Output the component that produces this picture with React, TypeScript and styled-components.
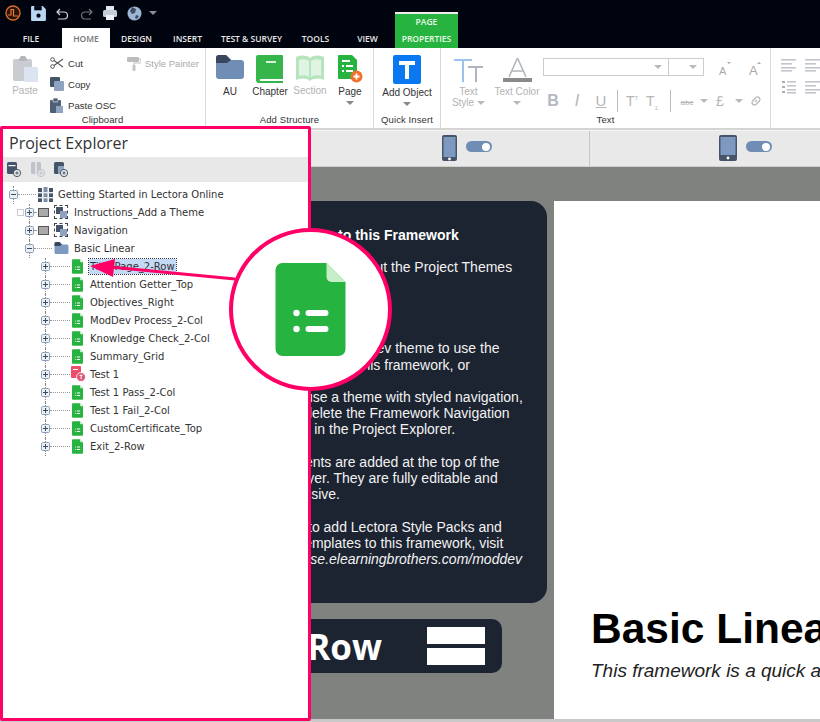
import { createGlobalStyle, styled } from 'styled-components';

const GlobalStyle = createGlobalStyle`
  html, body {
    margin: 0;
    padding: 0;
    height: 722px;
    overflow: hidden;
    background: #c8c8c8;
    font-family: "Liberation Sans", Arial, sans-serif;
  }
`;

const PINK = '#ff0066';
const GREEN = '#27b33f';
const SLATE = '#6f8db5';
const DARK_SLATE = '#46546a';

const Page = styled.div`
  position: relative;
  width: 820px;
  height: 722px;
  overflow: hidden;
  display: flex;
  flex-direction: column;
`;

/* ---------- title bar + tabs ---------- */
const TopBar = styled.div`
  height: 48px;
  background: #00040f;
  flex: none;
  display: flex;
  flex-direction: column;
`;
const QuickBar = styled.div`
  height: 28px;
  display: flex;
  align-items: center;
  padding: 0 0 2px 5px;
  gap: 8.5px;
  box-sizing: border-box;
`;
const TabRow = styled.div`
  display: flex;
  height: 20px;
  align-items: stretch;
`;
const Tab = styled.div<{ $w: number; $active?: boolean }>`
  width: ${(p) => p.$w}px;
  display: flex;
  align-items: center;
  justify-content: center;
  font-family: "Open Sans", sans-serif;
  font-size: 8.5px;
  font-weight: 600;
  color: ${(p) => (p.$active ? '#777' : '#e8e8e8')};
  background: ${(p) => (p.$active ? '#fff' : 'transparent')};
  white-space: nowrap;
`;
const ContextTab = styled.div`
  width: 63px;
  height: 36px;
  margin-top: -16px;
  box-sizing: border-box;
  border-top: 2px solid #eee;
  background: ${GREEN};
  color: #eafbe9;
  font-family: "Open Sans", sans-serif;
  font-size: 8.5px;
  font-weight: 600;
  text-align: center;
  display: flex;
  flex-direction: column;
  justify-content: space-between;
  padding: 2px 0 3px;
  line-height: 12px;
`;

/* ---------- ribbon ---------- */
const Ribbon = styled.div`
  height: 80px;
  flex: none;
  background: #fff;
  display: flex;
  border-bottom: 2px solid #d4d4d4;
`;
const Group = styled.div<{ $w: number }>`
  width: ${(p) => p.$w}px;
  flex: none;
  box-sizing: border-box;
  border-right: 1px solid #d8d8d8;
  display: flex;
  flex-direction: column;
`;
const GroupBody = styled.div<{ $pad?: number }>`
  flex: 1;
  display: flex;
  padding-left: ${(p) => p.$pad ?? 0}px;
  min-height: 0;
`;
const GroupLabel = styled.div`
  height: 15px;
  line-height: 13px;
  text-align: center;
  font-size: 9.5px;
  color: #333;
  flex: none;
  letter-spacing: 0.1px;
`;
const BigButton = styled.div<{ $w: number; $muted?: boolean }>`
  width: ${(p) => p.$w}px;
  flex: none;
  display: flex;
  flex-direction: column;
  align-items: center;
  padding-top: 7px;
  box-sizing: border-box;
  font-size: 10px;
  line-height: 11px;
  color: ${(p) => (p.$muted ? '#b2b2b2' : '#333')};
  text-align: center;
  svg { flex: none; }
`;
const TextStyleButton = styled(BigButton)`
  padding: 10px 4px 0 0;
`;
const TextColorButton = styled(BigButton)`
  padding-top: 9px;
  margin-left: -4px;
`;
const BigLabel = styled.span<{ $mt?: number }>`
  margin-top: ${(p) => p.$mt ?? 3}px;
  white-space: nowrap;
`;
const Caret = styled.span<{ $inline?: boolean; $light?: boolean }>`
  display: ${(p) => (p.$inline ? 'inline-block' : 'block')};
  width: 0;
  height: 0;
  flex: none;
  border-left: 4px solid transparent;
  border-right: 4px solid transparent;
  border-top: 4px solid ${(p) => (p.$light ? '#b9b9b9' : '#888')};
  margin: ${(p) => (p.$inline ? '0 0 1px 3px' : '4px auto 0')};
  vertical-align: middle;
`;
const QuickCaret = styled(Caret)`
  margin: 0 0 0 -1px;
  border-top-color: #8a8f96;
`;
const SmallCol = styled.div<{ $ml?: number }>`
  display: flex;
  flex-direction: column;
  gap: 6.5px;
  padding-top: 8px;
  margin-left: ${(p) => p.$ml ?? 0}px;
`;
const SmallItem = styled.div<{ $muted?: boolean }>`
  display: flex;
  align-items: center;
  gap: 4px;
  height: 15px;
  font-size: ${(p) => (p.$muted ? 9.5 : 9.6)}px;
  color: ${(p) => (p.$muted ? '#aaa' : '#333')};
  white-space: nowrap;
`;
const TextTools = styled.div`
  display: flex;
  flex-direction: column;
  padding-left: 5px;
`;
const SelectRow = styled.div`
  display: flex;
  align-items: center;
  height: 18px;
  margin-top: 10px;
`;
const FakeSelect = styled.div<{ $w: number }>`
  width: ${(p) => p.$w}px;
  height: 18px;
  box-sizing: border-box;
  border: 1px solid #ccc;
  margin-right: -1px;
  display: flex;
  align-items: center;
  justify-content: flex-end;
  padding-right: 6px;
`;
const SizeGlyph = styled.span<{ $ml: number; $big?: boolean }>`
  margin: 7px 0 0 ${(p) => p.$ml}px;
  font-size: ${(p) => (p.$big ? 13 : 11)}px;
  line-height: 12px;
  color: #a8a8a8;
  width: 12px;
  position: relative;
  &::after {
    content: '';
    position: absolute;
    right: 0;
    top: -3px;
    border-left: 2px solid transparent;
    border-right: 2px solid transparent;
    ${(p) => (p.$big ? 'border-bottom: 2px solid #a8a8a8;' : 'border-top: 2px solid #a8a8a8;')}
  }
`;
const FormatRow = styled.div`
  display: flex;
  align-items: center;
  height: 22px;
  margin-top: 14px;
  color: #b5b5b5;
`;
const FormatGlyph = styled.span<{ $w: number; $b?: boolean; $i?: boolean; $u?: boolean; $size?: number }>`
  width: ${(p) => p.$w}px;
  text-align: center;
  flex: none;
  font-size: ${(p) => p.$size ?? 14}px;
  line-height: 22px;
  font-weight: ${(p) => (p.$b ? 700 : 400)};
  font-style: ${(p) => (p.$i ? 'italic' : 'normal')};
  text-decoration: ${(p) => (p.$u ? 'underline' : 'none')};
  color: ${(p) => (p.$b ? '#b4b9c4' : '#b5b5b5')};
  sup, sub { font-size: 6px; line-height: 0; }
  s { font-size: 8px; }
`;
const FormatSep = styled.span`
  width: 1px;
  height: 22px;
  background: #bbb;
  flex: none;
  margin: 0 6px;
`;
const LinkSlot = styled.span`
  margin-left: 6px;
  display: flex;
`;
const AlignGrid = styled.div`
  display: grid;
  grid-template-columns: 15px 15px;
  grid-auto-rows: 14px;
  gap: 8px 9px;
  padding: 10px 0 0 10px;
`;

/* ---------- device bar ---------- */
const DeviceBar = styled.div`
  height: 37px;
  flex: none;
  display: flex;
  background: #e9e9e9;
  border-bottom: 1px solid #d0d0d0;
  border-top: 1px solid #f4f4f4;
  box-sizing: border-box;
`;
const DeviceCell = styled.div<{ $w?: number; $pad: number }>`
  width: ${(p) => (p.$w ? `${p.$w}px` : 'auto')};
  flex: ${(p) => (p.$w ? 'none' : '1')};
  box-sizing: border-box;
  display: flex;
  align-items: center;
  gap: 9px;
  padding-left: ${(p) => p.$pad}px;
  border-right: ${(p) => (p.$w ? '1px solid #c6c6c6' : 'none')};
`;
const Toggle = styled.span`
  width: 26px;
  height: 11px;
  border-radius: 6px;
  background: ${SLATE};
  position: relative;
  margin-top: -4px;
  &::after {
    content: '';
    position: absolute;
    right: 2px;
    top: 1.5px;
    width: 8px;
    height: 8px;
    border-radius: 50%;
    background: #fff;
  }
`;

/* ---------- canvas ---------- */
const Canvas = styled.div`
  flex: none;
  height: 552px;
  background: #808280;
  display: flex;
  padding-top: 34px;
  box-sizing: border-box;
  gap: 7px;
`;
const LeftCol = styled.div`
  width: 547px;
  flex: none;
  display: flex;
  flex-direction: column;
  gap: 16px;
`;
const InfoCard = styled.div`
  height: 402px;
  flex: none;
  box-sizing: border-box;
  background: #1c2331;
  border-radius: 0 16px 16px 0;
  padding: 26px 0 0 273px;
  color: #f2f2f2;
  font-size: 14px;
  line-height: 16.2px;
`;
const InfoHead = styled.div`
  font-weight: 700;
  color: #fff;
  white-space: nowrap;
  margin-bottom: 16.2px;
`;
const InfoPara = styled.p`
  margin: 0 0 16.2px;
  white-space: nowrap;
  em { font-style: italic; }
`;
const RowCard = styled.div`
  height: 54px;
  margin-right: 45px;
  background: #1c2331;
  border-radius: 0 10px 10px 0;
  display: flex;
  align-items: center;
  justify-content: flex-end;
  gap: 45px;
  padding-right: 17px;
`;
const RowTitle = styled.span`
  font-family: "Open Sans", sans-serif;
  font-size: 35px;
  font-weight: 700;
  color: #fff;
  white-space: nowrap;
`;
const RowGlyph = styled.div`
  width: 58px;
  display: flex;
  flex-direction: column;
  gap: 4px;
  i { display: block; height: 17px; background: #fff; }
`;
const WhitePage = styled.div`
  flex: 1;
  background: #fff;
  display: flex;
  flex-direction: column;
  justify-content: flex-end;
  padding: 0 0 37px 37px;
  min-width: 0;
  white-space: nowrap;
`;
const BigTitle = styled.h1`
  margin: 0;
  font-size: 42.5px;
  line-height: 50px;
  font-weight: 700;
  color: #000;
`;
const Subtitle = styled.div`
  margin-top: 6px;
  font-size: 19px;
  line-height: 22px;
  font-style: italic;
  color: #222;
`;

/* ---------- project explorer (highlighted overlay) ---------- */
const Explorer = styled.aside`
  position: absolute;
  left: 0;
  top: 126px;
  width: 311px;
  height: 595px;
  box-sizing: border-box;
  border: 3px solid ${PINK};
  border-radius: 2px;
  background: #fff;
  display: flex;
  flex-direction: column;
`;
const ExplorerTitle = styled.div`
  height: 28px;
  flex: none;
  padding-left: 6px;
  font-family: "Open Sans", sans-serif;
  font-size: 16px;
  line-height: 28px;
  color: #333;
`;
const ExplorerTools = styled.div`
  height: 25px;
  flex: none;
  background: #e8e8e8;
  display: flex;
  align-items: center;
  gap: 9.5px;
  padding-left: 4px;
`;
const Tree = styled.div`
  padding-top: 3px;
`;
const TreeRow = styled.div<{ $level: number }>`
  height: 18px;
  display: flex;
  align-items: center;
  padding-left: ${(p) => 6 + p.$level * 16}px;
  font-family: "DejaVu Sans", sans-serif;
  font-size: 10px;
  color: #333;
  white-space: nowrap;
`;
const Expander = styled.span<{ $minus?: boolean }>`
  width: 9px;
  height: 9px;
  box-sizing: border-box;
  flex: none;
  border: 1px solid #8ea0b8;
  border-radius: 2px;
  background: #eaeff6;
  position: relative;
  &::before {
    content: '';
    position: absolute;
    left: 3px;
    top: -5px;
    height: 18px;
    border-left: 1px dotted #8a8a8a;
  }
  &::after {
    content: '';
    position: absolute;
    inset: 0;
    background:
      linear-gradient(#3c4a60, #3c4a60) center / 5px 1px no-repeat,
      linear-gradient(#3c4a60, #3c4a60) center / ${(p) => (p.$minus ? '0 0' : '1px 5px')} no-repeat,
      #eaeff6;
  }
`;
const Faint = styled.span`
  width: 7px;
  height: 7px;
  border: 1px solid #ccc;
  flex: none;
  margin: 0 1px 0 -8px;
  box-sizing: border-box;
`;
const Dots = styled.span<{ $w: number }>`
  width: ${(p) => p.$w}px;
  flex: none;
  border-top: 1px dotted #999;
  margin-right: 2px;
`;
const Label = styled.span<{ $ml: number; $selected?: boolean }>`
  margin-left: ${(p) => p.$ml}px;
  padding: 1px 1px;
  line-height: 13px;
  outline: ${(p) => (p.$selected ? '1px dotted #334' : 'none')};
  background: ${(p) => (p.$selected ? '#c3d9f5' : 'transparent')};
`;
const StateBox = styled.span`
  width: 11px;
  height: 9px;
  box-sizing: border-box;
  border: 1px solid #555;
  background: #aaa;
  flex: none;
  margin-right: 5px;
`;
const DashedIcon = styled.span`
  width: 14px;
  height: 14px;
  box-sizing: border-box;
  border: 1px dashed #444;
  flex: none;
  display: flex;
  align-items: center;
  justify-content: center;
`;

/* ---------- annotation ---------- */
const Callout = styled.div`
  position: absolute;
  left: 229px;
  top: 228px;
  width: 163px;
  height: 163px;
  box-sizing: border-box;
  border: 4.5px solid ${PINK};
  border-radius: 50%;
  background: #fff;
  display: flex;
  align-items: center;
  justify-content: center;
`;
const Pointer = styled.svg`
  position: absolute;
  left: 0;
  top: 0;
  pointer-events: none;
`;

/* ---------- icons ---------- */
const DocIcon = ({ w, h }: { w: number; h: number }) => (
  <svg width={w} height={h} viewBox="0 0 70 93" style={{ flex: 'none' }}>
    <path d="M7 0H51L70 19V86a7 7 0 0 1-7 7H7a7 7 0 0 1-7-7V7a7 7 0 0 1 7-7Z" fill={GREEN} />
    <path d="M51 0L70 19H56a5 5 0 0 1-5-5Z" fill="#c6efc8" />
    <circle cx="21" cy="50" r="3.2" fill="#fff" />
    <circle cx="21" cy="66" r="3.2" fill="#fff" />
    <rect x="30" y="47" width="23" height="6" rx="3" fill="#fff" />
    <rect x="30" y="63" width="23" height="6" rx="3" fill="#fff" />
  </svg>
);

const Logo = () => (
  <svg width="16" height="16" viewBox="0 0 16 16">
    <circle cx="8" cy="8" r="7" fill="#2a1408" stroke="#d96a2a" strokeWidth="1.4" />
    <path d="M3 10h3V4.5h2.5V11H13" fill="none" stroke="#e87a3a" strokeWidth="1.2" />
  </svg>
);
const Save = () => (
  <svg width="17" height="17" viewBox="0 0 16 16">
    <path d="M1 2a1 1 0 0 1 1-1h10l3 3v10a1 1 0 0 1-1 1H2a1 1 0 0 1-1-1Z" fill="#b9d6f2" />
    <rect x="4" y="1" width="7" height="4" fill="#00040f" />
    <circle cx="8" cy="10" r="2" fill="#00040f" />
  </svg>
);
const Undo = ({ dim }: { dim?: boolean }) => (
  <svg width="15" height="15" viewBox="0 0 15 15" style={dim ? { transform: 'scaleX(-1)' } : undefined}>
    <path d="M5 3L2 6l3 3M2 6h7a3.5 3.5 0 0 1 0 7H3" fill="none" stroke={dim ? '#777' : '#cfd6de'} strokeWidth="1.2" />
  </svg>
);
const Printer = () => (
  <svg width="16" height="16" viewBox="0 0 16 16">
    <rect x="4" y="1" width="8" height="4" fill="#dfe6ee" />
    <rect x="1" y="5" width="14" height="7" rx="1.5" fill="#c3ccd8" />
    <rect x="4" y="10" width="8" height="5" fill="#eef2f6" />
  </svg>
);
const Globe = () => (
  <svg width="15" height="15" viewBox="0 0 15 15">
    <circle cx="7.5" cy="7.5" r="7" fill="#9fb6d3" />
    <path d="M5 1l4 2-1 4-3 1-2-3ZM9 9l3 1-2 3-2-1Z" fill="#3d4d63" />
  </svg>
);
const PasteIcon = () => (
  <svg width="25" height="27" viewBox="0 0 25 27">
    <rect x="0" y="4" width="19" height="22" rx="2" fill="#c9ccd1" />
    <path d="M6 4l2-3h4l2 3v2H6Z" fill="#b3b7bd" />
    <rect x="11" y="12" width="14" height="15" rx="1" fill="#dbe4f0" />
  </svg>
);
const Scissors = () => (
  <svg width="14" height="12" viewBox="0 0 14 12">
    <circle cx="2.5" cy="2.5" r="1.8" fill="none" stroke="#555" />
    <circle cx="2.5" cy="9.5" r="1.8" fill="none" stroke="#555" />
    <path d="M4 3.5L13 10M4 8.5L13 2" stroke="#555" strokeWidth="1.1" />
  </svg>
);
const CopyIcon = () => (
  <svg width="14" height="14" viewBox="0 0 14 14">
    <rect x="0" y="0" width="10" height="10" rx="1" fill="#46546a" />
    <rect x="4" y="4" width="10" height="10" rx="1" fill="#8ea3c0" />
  </svg>
);
const PasteOscIcon = () => (
  <svg width="14" height="15" viewBox="0 0 14 15">
    <rect x="0" y="2" width="11" height="13" rx="1" fill="#4d6078" />
    <rect x="3" y="0" width="5" height="4" rx="1" fill="#4d6078" stroke="#fff" strokeWidth="0.6" />
    <rect x="6" y="8" width="7" height="7" fill="#8ea3c0" />
  </svg>
);
const Brush = () => (
  <svg width="14" height="14" viewBox="0 0 14 14">
    <rect x="0" y="0" width="12" height="5" rx="1" fill="#bcbcbc" />
    <path d="M12 2h2v4H7v3" fill="none" stroke="#c4c4c4" strokeWidth="1.2" />
    <rect x="5.5" y="8" width="3" height="6" rx="1" fill="#c4c4c4" />
  </svg>
);
const Folder = ({ w, h, color = '#6f8db5' }: { w: number; h: number; color?: string }) => (
  <svg width={w} height={h} viewBox="0 0 28 24" style={{ flex: 'none' }}>
    <path d="M0 3a3 3 0 0 1 3-3h7l5 5h10a3 3 0 0 1 3 3v13a3 3 0 0 1-3 3H3a3 3 0 0 1-3-3Z" fill={color} />
    <path d="M0 3a3 3 0 0 1 3-3h7l5 5-4 3H0Z" fill="#39475c" />
  </svg>
);
const Book = () => (
  <svg width="28" height="28" viewBox="0 0 28 28">
    <path d="M2 0h24a1 1 0 0 1 1 1v23H4a2 2 0 0 0 0 2h23v2H3a3 3 0 0 1-3-3V2a2 2 0 0 1 2-2Z" fill="#35b54a" />
    <rect x="10" y="6" width="10" height="2" fill="#d6f2da" />
  </svg>
);
const OpenBook = () => (
  <svg width="28" height="27" viewBox="0 0 28 27">
    <path d="M0 2c5-2 10-2 14 1 4-3 9-3 14-1v23c-5-2-10-2-14 1-4-3-9-3-14-1Z" fill="#b5e4bd" />
    <path d="M3 5c4-1 7-1 10 1v16c-3-2-6-2-10-1ZM25 5c-4-1-7-1-10 1v16c3-2 6-2 10-1Z" fill="#dff4e2" />
  </svg>
);
const PageAdd = () => (
  <svg width="25" height="28" viewBox="0 0 25 28">
    <path d="M1 0h13l5 5v19H1a1 1 0 0 1-1-1V1a1 1 0 0 1 1-1Z" fill={GREEN} />
    <rect x="4" y="5" width="8" height="2" fill="#fff" />
    <rect x="4" y="10" width="2" height="2" fill="#fff" />
    <rect x="8" y="10" width="7" height="2" fill="#fff" />
    <rect x="4" y="15" width="2" height="2" fill="#fff" />
    <rect x="8" y="15" width="7" height="2" fill="#fff" />
    <circle cx="18.5" cy="21.5" r="6" fill="#f0702e" />
    <path d="M18.5 18.5v6M15.5 21.5h6" stroke="#fff" strokeWidth="1.8" />
  </svg>
);
const AddObject = () => (
  <svg width="28" height="29" viewBox="0 0 28 29">
    <rect width="28" height="29" rx="2" fill="#0a78f0" />
    <path d="M6 6h16v4h-6v14h-4V10H6Z" fill="#fff" />
  </svg>
);
const TextStyleIcon = () => (
  <svg width="29" height="24" viewBox="0 0 29 24">
    <path d="M0 1h18v2h-8v21H8V3H0Z" fill="#9cc3ee" />
    <path d="M14 8h15v2h-6v14h-2V10h-7Z" fill="#b0b6c0" />
  </svg>
);
const TextColorIcon = () => (
  <svg width="29" height="25" viewBox="0 0 29 25">
    <path d="M14.5 1L6 20M14.5 1L23 20M9 14h11" fill="none" stroke="#b0b6c0" strokeWidth="1.6" />
    <rect y="21" width="29" height="4" fill="#8a8a8a" />
  </svg>
);
const LinkIcon = () => (
  <svg width="14" height="14" viewBox="0 0 14 14">
    <path d="M6 8l2-2M5 5.5L7 3.5a2.5 2.5 0 0 1 3.5 3.5L8.5 9M9 8.5L7 10.5A2.5 2.5 0 0 1 3.5 7L5.5 5" fill="none" stroke="#b5b5b5" strokeWidth="1.2" />
  </svg>
);
const AlignIcon = ({ numbered }: { numbered?: boolean }) => (
  <svg width="15" height="14" viewBox="0 0 15 14">
    {[1, 5, 9, 12].map((y, i) => (
      <rect key={y} x={numbered ? 6 : 0} y={y} width={numbered ? 9 : i % 2 ? 11 : 15} height="1.6" fill="#c2c6cc" />
    ))}
    {numbered && [1, 6, 11].map((y) => <rect key={y} x="1" y={y} width="3" height="2" fill="#a9afb8" />)}
  </svg>
);
const Phone = ({ w, screen }: { w: number; screen: number }) => (
  <svg width={w} height="26" viewBox={`0 0 ${w} 26`} style={{ marginTop: -2 }}>
    <rect width={w} height="26" rx="2" fill={DARK_SLATE} />
    <rect x="1.5" y="2" width={w - 3} height={screen} fill="#7d99c0" />
    <circle cx={w / 2} cy={(screen + 26) / 2 + 1} r="1.4" fill="#fff" />
  </svg>
);
const ToolIcon = ({ dim, kind }: { dim?: boolean; kind: 'page' | 'book' | 'stack' }) => (
  <svg width="14" height="15" viewBox="0 0 14 15">
    <rect width="10" height="12" rx="1.5" fill={dim ? '#bfc3c9' : DARK_SLATE} />
    {kind === 'page' && <rect x="1.5" y="3" width="7" height="1.2" fill="#fff" />}
    {kind === 'book' && <rect x="4.5" y="0" width="1" height="12" fill="#fff" />}
    {kind === 'stack' && <rect x="4" y="4" width="6" height="8" fill="#8ea3c0" />}
    <circle cx="10" cy="11" r="3.6" fill={dim ? '#e2e4e7' : '#f0f0f0'} stroke={dim ? '#bfc3c9' : DARK_SLATE} />
    <path d="M8.3 11h3.4M10 9.3v3.4" stroke={dim ? '#bfc3c9' : DARK_SLATE} />
  </svg>
);
const BookStack = () => (
  <svg width="15" height="15" viewBox="0 0 15 15" style={{ flex: 'none' }}>
    <rect x="0" y="1" width="4" height="14" fill={DARK_SLATE} />
    <rect x="5.5" y="0" width="4" height="15" fill="#7d8da3" />
    <rect x="11" y="1" width="4" height="14" fill={DARK_SLATE} />
    <rect x="0" y="5" width="15" height="1.4" fill="#e4e8ee" />
    <rect x="0" y="10" width="15" height="1.4" fill="#e4e8ee" />
  </svg>
);
const StackSquares = () => (
  <svg width="11" height="11" viewBox="0 0 11 11">
    <rect width="7" height="7" fill={DARK_SLATE} />
    <rect x="4" y="4" width="7" height="7" fill="#8ea3c0" />
  </svg>
);
const TestIcon = () => (
  <svg width="15" height="16" viewBox="0 0 15 16" style={{ flex: 'none', marginLeft: -1, marginRight: -3 }}>
    <rect width="10" height="12" rx="1" fill="#ee4e68" />
    <rect x="2" y="3" width="5" height="1" fill="#fff" />
    <circle cx="10" cy="11" r="4.5" fill="#e0557a" stroke="#fff" strokeWidth="0.8" />
    <rect x="8.5" y="8.8" width="3" height="1" fill="#fff" />
    <rect x="9.6" y="8.8" width="1" height="4.5" fill="#fff" />
  </svg>
);

const tabs: [string, number, boolean?][] = [
  ['FILE', 62],
  ['HOME', 48, true],
  ['DESIGN', 53],
  ['INSERT', 49],
  ['TEST & SURVEY', 79],
  ['TOOLS', 49],
  ['VIEW', 55],
];

const pages = [
  { name: 'Title Page_2-Row', selected: true },
  { name: 'Attention Getter_Top' },
  { name: 'Objectives_Right' },
  { name: 'ModDev Process_2-Col' },
  { name: 'Knowledge Check_2-Col' },
  { name: 'Summary_Grid' },
  { name: 'Test 1', test: true },
  { name: 'Test 1 Pass_2-Col' },
  { name: 'Test 1 Fail_2-Col' },
  { name: 'CustomCertificate_Top' },
  { name: 'Exit_2-Row' },
];

const App = () => {
  return (
    <Page>
      <GlobalStyle />
      <TopBar>
        <QuickBar>
          <Logo />
          <Save />
          <Undo />
          <Undo dim />
          <Printer />
          <Globe />
          <QuickCaret $inline />
        </QuickBar>
        <TabRow>
          {tabs.map(([name, w, active]) => (
            <Tab key={name} $w={w} $active={active}>{name}</Tab>
          ))}
          <ContextTab>
            <span>PAGE</span>
            <span>PROPERTIES</span>
          </ContextTab>
        </TabRow>
      </TopBar>

      <Ribbon>
        <Group $w={206}>
          <GroupBody>
            <BigButton $w={50} $muted>
              <PasteIcon />
              <BigLabel>Paste</BigLabel>
            </BigButton>
            <SmallCol>
              <SmallItem><Scissors />Cut</SmallItem>
              <SmallItem><CopyIcon />Copy</SmallItem>
              <SmallItem><PasteOscIcon />Paste OSC</SmallItem>
            </SmallCol>
            <SmallCol $ml={11}>
              <SmallItem $muted><Brush />Style Painter</SmallItem>
            </SmallCol>
          </GroupBody>
          <GroupLabel>Clipboard</GroupLabel>
        </Group>
        <Group $w={168}>
          <GroupBody $pad={4}>
            <BigButton $w={40}><Folder w={28} h={24} /><BigLabel $mt={7}>AU</BigLabel></BigButton>
            <BigButton $w={40}><Book /><BigLabel>Chapter</BigLabel></BigButton>
            <BigButton $w={40} $muted><OpenBook /><BigLabel>Section</BigLabel></BigButton>
            <BigButton $w={40}>
              <PageAdd />
              <BigLabel>Page</BigLabel>
              <Caret />
            </BigButton>
          </GroupBody>
          <GroupLabel>Add Structure</GroupLabel>
        </Group>
        <Group $w={67}>
          <GroupBody>
            <BigButton $w={66}>
              <AddObject />
              <BigLabel>Add Object</BigLabel>
              <Caret />
            </BigButton>
          </GroupBody>
          <GroupLabel>Quick Insert</GroupLabel>
        </Group>
        <Group $w={330}>
          <GroupBody>
            <TextStyleButton $w={59} $muted>
              <TextStyleIcon />
              <BigLabel $mt={4}>Text<br />Style<Caret $inline $light /></BigLabel>
            </TextStyleButton>
            <TextColorButton $w={42} $muted>
              <TextColorIcon />
              <BigLabel $mt={4}>Text Color</BigLabel>
              <Caret $light />
            </TextColorButton>
            <TextTools>
              <SelectRow>
                <FakeSelect $w={126}><Caret $inline $light /></FakeSelect>
                <FakeSelect $w={36}><Caret $inline $light /></FakeSelect>
                <SizeGlyph $ml={16}>A</SizeGlyph>
                <SizeGlyph $ml={18} $big>A</SizeGlyph>
              </SelectRow>
              <FormatRow>
                <FormatGlyph $w={20} $b $size={16}>B</FormatGlyph>
                <FormatGlyph $w={28} $i $size={16}>I</FormatGlyph>
                <FormatGlyph $w={20} $u $size={15}>U</FormatGlyph>
                <FormatSep />
                <FormatGlyph $w={16}>T<sup>T</sup></FormatGlyph>
                <FormatGlyph $w={24}>T<sub>1</sub></FormatGlyph>
                <FormatSep />
                <FormatGlyph $w={20}><s>abc</s></FormatGlyph>
                <Caret $inline $light />
                <FormatGlyph $w={24}>£</FormatGlyph>
                <Caret $inline $light />
                <LinkSlot><LinkIcon /></LinkSlot>
              </FormatRow>
            </TextTools>
          </GroupBody>
          <GroupLabel>Text</GroupLabel>
        </Group>
        <AlignGrid>
          <AlignIcon />
          <AlignIcon />
          <AlignIcon numbered />
          <AlignIcon />
        </AlignGrid>
      </Ribbon>

      <DeviceBar>
        <DeviceCell $w={590} $pad={442}>
          <Phone w={15} screen={20} />
          <Toggle />
        </DeviceCell>
        <DeviceCell $pad={129}>
          <Phone w={18} screen={18} />
          <Toggle />
        </DeviceCell>
      </DeviceBar>

      <Canvas>
        <LeftCol>
          <InfoCard>
            <InfoHead>Welcome to this Framework</InfoHead>
            <InfoPara>First off, check out the Project Themes<br />in Design<br /><br /><br /></InfoPara>
            <InfoPara>Select the ModDev theme to use the<br />core styles in this framework, or</InfoPara>
            <InfoPara>Now use a theme with styled navigation,<br />then delete the Framework Navigation<br />layers in the Project Explorer.</InfoPara>
            <InfoPara>Elements are added at the top of the<br />the layer. They are fully editable and<br />expansive.</InfoPara>
            <InfoPara>Wish to add Lectora Style Packs and<br />and templates to this framework, visit<br /><em>exercise.elearningbrothers.com/moddev</em></InfoPara>
          </InfoCard>
          <RowCard>
            <RowTitle>2-Row</RowTitle>
            <RowGlyph><i /><i /></RowGlyph>
          </RowCard>
        </LeftCol>
        <WhitePage>
          <BigTitle>Basic Linear</BigTitle>
          <Subtitle>This framework is a quick and easy way to build</Subtitle>
        </WhitePage>
      </Canvas>

      <Explorer>
        <ExplorerTitle>Project Explorer</ExplorerTitle>
        <ExplorerTools>
          <ToolIcon kind="page" />
          <ToolIcon kind="book" dim />
          <ToolIcon kind="stack" />
        </ExplorerTools>
        <Tree>
          <TreeRow $level={0}>
            <Expander $minus />
            <Dots $w={18} />
            <BookStack />
            <Label $ml={4}>Getting Started in Lectora Online</Label>
          </TreeRow>
          <TreeRow $level={1}>
            <Faint />
            <Expander />
            <Dots $w={2} />
            <StateBox />
            <DashedIcon><StackSquares /></DashedIcon>
            <Label $ml={5}>Instructions_Add a Theme</Label>
          </TreeRow>
          <TreeRow $level={1}>
            <Expander />
            <Dots $w={2} />
            <StateBox />
            <DashedIcon><StackSquares /></DashedIcon>
            <Label $ml={5}>Navigation</Label>
          </TreeRow>
          <TreeRow $level={1}>
            <Expander $minus />
            <Dots $w={18} />
            <Folder w={15} h={12} color="#7d99c0" />
            <Label $ml={4}>Basic Linear</Label>
          </TreeRow>
          {pages.map((page) => (
            <TreeRow $level={2} key={page.name}>
              <Expander />
              <Dots $w={20} />
              {page.test ? <TestIcon /> : <DocIcon w={11} h={15} />}
              <Label $ml={6} $selected={page.selected}>{page.name}</Label>
            </TreeRow>
          ))}
        </Tree>
      </Explorer>

      <Pointer width="240" height="300" viewBox="0 0 240 300">
        <path d="M235 279L110 267" stroke={PINK} strokeWidth="3" fill="none" />
        <path d="M90 266L115 259L113 277Z" fill={PINK} />
      </Pointer>
      <Callout>
        <DocIcon w={71} h={93} />
      </Callout>
    </Page>
  );
};

export default App;
